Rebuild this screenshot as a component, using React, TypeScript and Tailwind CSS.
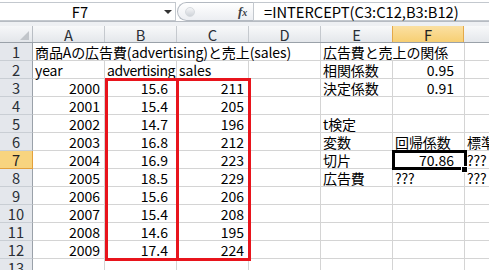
import React from "react";

type Cell = { t?: string; r?: boolean; span?: number; tight?: boolean };

const font = "font-['Noto_Sans_CJK_JP','Noto_Sans_CJK_SC',sans-serif]";

const colNames = ["A", "B", "C", "D", "E", "F", "G"];
const padR = ["pr-[4px]", "pr-[8px]", "pr-[4px]", "pr-[4px]", "pr-[4px]", "pr-[10px]", "pr-[4px]"];
const widths: Record<number, string> = { 1: "w-[72px]", 2: "w-[144px]", 4: "w-[288px]" };

const n = (t: string): Cell => ({ t, r: true });
const s = (t: string): Cell => ({ t });
const e: Cell = {};

const rows: Cell[][] = [
  [{ t: "商品Aの広告費(advertising)と売上(sales)", span: 4 }, { t: "広告費と売上の関係", span: 2 }, e],
  [s("year"), { t: "advertising", tight: true }, s("sales"), e, s("相関係数"), n("0.95"), e],
  [n("2000"), n("15.6"), n("211"), e, s("決定係数"), n("0.91"), e],
  [n("2001"), n("15.4"), n("205"), e, e, e, e],
  [n("2002"), n("14.7"), n("196"), e, s("t検定"), e, e],
  [n("2003"), n("16.8"), n("212"), e, s("変数"), s("回帰係数"), s("標準誤差")],
  [n("2004"), n("16.9"), n("223"), e, s("切片"), n("70.86"), s("???")],
  [n("2005"), n("18.5"), n("229"), e, s("広告費"), s("???"), s("???")],
  [n("2006"), n("15.6"), n("206"), e, e, e, e],
  [n("2007"), n("15.4"), n("208"), e, e, e, e],
  [n("2008"), n("14.6"), n("195"), e, e, e, e],
  [n("2009"), n("17.4"), n("224"), e, e, e, e],
  [e, e, e, e, e, e, e],
];

function FormulaBar() {
  return (
    <div className="h-[26px] bg-[#eef0f3] relative">
      <div className="h-[22px] bg-white border-b border-[#b6bbc2] flex pt-[2px]">
        <div className="w-[176px] h-[19px] border-t border-r border-b border-[#c3c8ce] flex items-center relative">
          <span className="w-[160px] text-center leading-[18px] text-black">F7</span>
          <span className="absolute left-[164px] top-[7px] w-0 h-0 border-l-[4px] border-r-[4px] border-t-[4px] border-l-transparent border-r-transparent border-t-[#333]" />
        </div>
        <div className="w-[76px] h-[19px] ml-[1px] rounded-l-full border border-r-0 border-[#b3b9c1] bg-gradient-to-b from-white to-[#eceef2] flex items-center relative">
          <span className="ml-[7px] w-[10px] h-[10px] rounded-full bg-gradient-to-b from-[#f4f5f7] to-[#cfd3d9] border border-[#d6dade]" />
          <span className="absolute left-[60px] top-[0px] font-['Liberation_Serif',serif] italic font-bold text-[13px] leading-[18px] text-[#3a3f46]">
            f<span className="text-[10px]">x</span>
          </span>
        </div>
        <div className="flex-1 h-[19px] border border-r-0 border-[#c3c8ce] pl-[10px] leading-[18px] text-black whitespace-nowrap">
          =INTERCEPT(C3:C12,B3:B12)
        </div>
      </div>
    </div>
  );
}

function HeaderRow() {
  return (
    <div className="flex h-[17px] border-b border-[#9aa1a9]">
      <div className="w-[33px] shrink-0 h-full bg-gradient-to-b from-[#f6f7f9] to-[#e3e6ea] border-r border-[#b9bec4] relative">
        <span className="absolute right-[3px] bottom-[2px] w-0 h-0 border-b-[9px] border-l-[9px] border-b-[#c1c5ca] border-l-transparent" />
      </div>
      {colNames.map((c) => (
        <div
          key={c}
          className={
            c === "F"
              ? "w-[72px] shrink-0 h-full bg-gradient-to-b from-[#fbe0a2] to-[#f7cf72] border-r border-l border-[#e4a94a] -ml-[1px] text-center leading-[17px] text-[#222]"
              : "w-[72px] shrink-0 h-full bg-gradient-to-b from-[#f8f9fa] to-[#e4e7eb] border-r border-[#c5c9ce] text-center leading-[17px] text-[#2a2f36]"
          }
        >
          {c}
        </div>
      ))}
    </div>
  );
}

function SheetRow({ idx, cells }: { idx: number; cells: Cell[] }) {
  let col = 0;
  return (
    <div className="flex h-[18px]">
      <div
        className={
          idx === 7
            ? "w-[33px] shrink-0 h-full bg-[#f8d47f] border-r border-b border-[#e3a03c] text-center leading-[18px] text-[#222]"
            : "w-[33px] shrink-0 h-full bg-[#e4e7ec] border-r border-b border-r-[#9aa1a9] border-b-[#c9ced4] text-center leading-[18px] text-[#2a2f36]"
        }
      >
        {idx}
      </div>
      {cells.map((c, i) => {
        const span = c.span ?? 1;
        const start = col;
        col += span;
        return (
          <div
            key={i}
            className={`${widths[span]} shrink-0 h-full border-r border-b border-[#d4d4d4] whitespace-nowrap text-[14px] leading-[18px] text-black ${
              c.r
                ? `text-right overflow-hidden ${padR[start]}`
                : c.tight
                ? "text-left pl-[2px] tracking-[-0.45px]"
                : "text-left pl-[2px] tracking-[-0.1px]"
            }`}
          >
            {c.t}
          </div>
        );
      })}
    </div>
  );
}

export default function App() {
  return (
    <div className={`w-[489px] h-[270px] overflow-hidden bg-white relative ${font} text-[14.7px]`}>
      <FormulaBar />
      <HeaderRow />
      {rows.map((r, i) => (
        <SheetRow key={i} idx={i + 1} cells={r} />
      ))}

      {/* red boxes around B3:B12 and C3:C12 */}
      <div className="absolute left-[105px] top-[78px] w-[146px] h-[183px] border-[3px] border-[#e8141c]" />
      <div className="absolute left-[176px] top-[78px] w-[3px] h-[183px] bg-[#e8141c]" />

      {/* active cell F7 */}
      <div className="absolute left-[392px] top-[150px] w-[75px] h-[20px] border-[3px] border-black" />
      <div className="absolute left-[461px] top-[166px] w-[7px] h-[7px] bg-black border border-white" />
    </div>
  );
}
